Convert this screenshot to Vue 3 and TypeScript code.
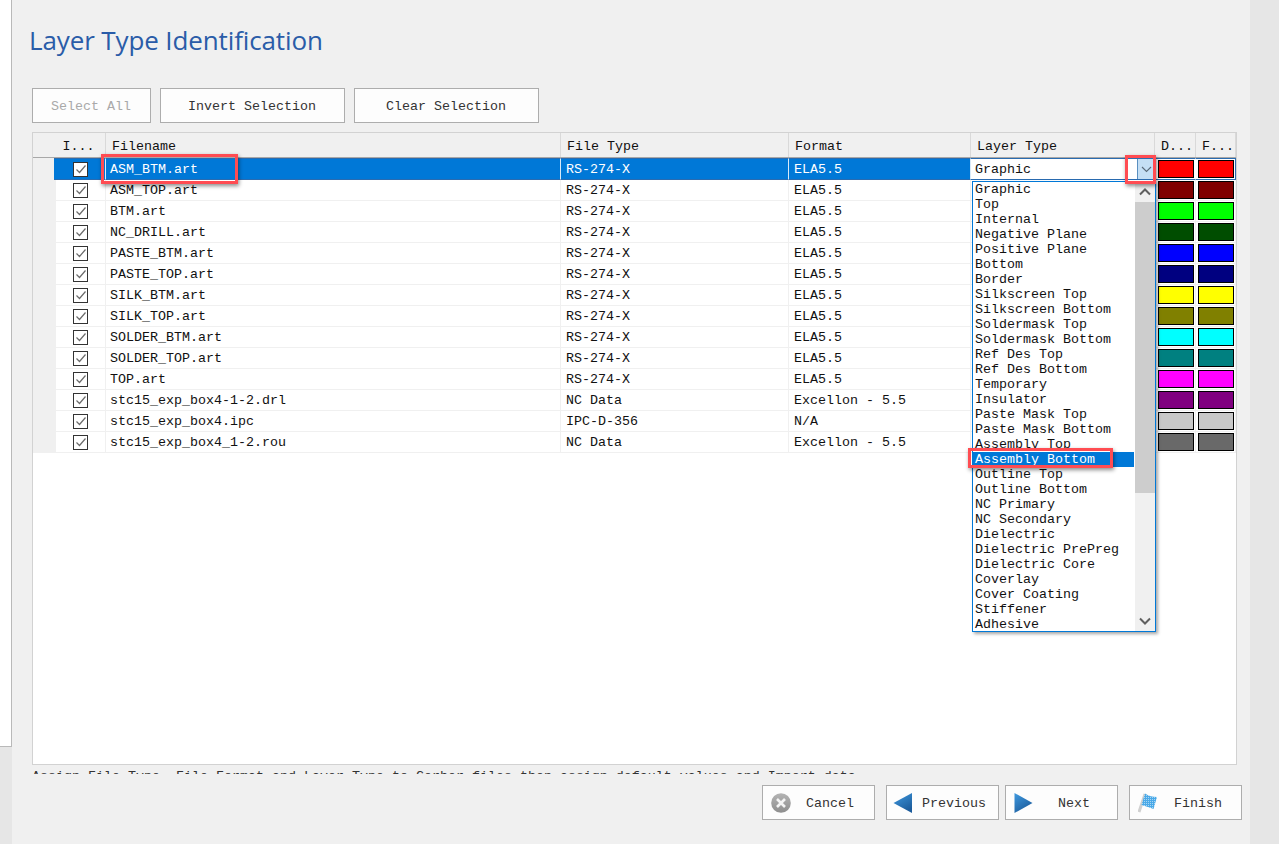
<script setup lang="ts">
const files: [string, string, string, string, string][] = [
  ['ASM_BTM.art', 'RS-274-X', 'ELA5.5', '#ff0000', 'Graphic'],
  ['ASM_TOP.art', 'RS-274-X', 'ELA5.5', '#800000', ''],
  ['BTM.art', 'RS-274-X', 'ELA5.5', '#00ff00', ''],
  ['NC_DRILL.art', 'RS-274-X', 'ELA5.5', '#004d00', ''],
  ['PASTE_BTM.art', 'RS-274-X', 'ELA5.5', '#0000ff', ''],
  ['PASTE_TOP.art', 'RS-274-X', 'ELA5.5', '#000080', ''],
  ['SILK_BTM.art', 'RS-274-X', 'ELA5.5', '#ffff00', ''],
  ['SILK_TOP.art', 'RS-274-X', 'ELA5.5', '#808000', ''],
  ['SOLDER_BTM.art', 'RS-274-X', 'ELA5.5', '#00ffff', ''],
  ['SOLDER_TOP.art', 'RS-274-X', 'ELA5.5', '#008080', ''],
  ['TOP.art', 'RS-274-X', 'ELA5.5', '#ff00ff', ''],
  ['stc15_exp_box4-1-2.drl', 'NC Data', 'Excellon - 5.5', '#800080', ''],
  ['stc15_exp_box4.ipc', 'IPC-D-356', 'N/A', '#c8c8c8', ''],
  ['stc15_exp_box4_1-2.rou', 'NC Data', 'Excellon - 5.5', '#696969', '']
]
const layers: string[] = [
  'Graphic', 'Top', 'Internal', 'Negative Plane', 'Positive Plane', 'Bottom', 'Border',
  'Silkscreen Top', 'Silkscreen Bottom', 'Soldermask Top', 'Soldermask Bottom', 'Ref Des Top',
  'Ref Des Bottom', 'Temporary', 'Insulator', 'Paste Mask Top', 'Paste Mask Bottom', 'Assembly Top',
  'Assembly Bottom', 'Outline Top', 'Outline Bottom', 'NC Primary', 'NC Secondary', 'Dielectric',
  'Dielectric PrePreg', 'Dielectric Core', 'Coverlay', 'Cover Coating', 'Stiffener', 'Adhesive'
]
</script>

<template>
  <div class="page">
    <div class="side"><div class="side-white"></div></div>
    <main class="main">
      <h1 class="title">Layer Type Identification</h1>
      <div class="tools">
        <button class="btn sel disabled">Select All</button>
        <button class="btn wide">Invert Selection</button>
        <button class="btn wide">Clear Selection</button>
      </div>
      <section class="table">
        <div class="row head">
          <div class="c c0"></div>
          <div class="c c1 ctr">I...</div>
          <div class="c c2">Filename</div>
          <div class="c c3">File Type</div>
          <div class="c c4">Format</div>
          <div class="c c5">Layer Type</div>
          <div class="c c6">D...</div>
          <div class="c c7">F...</div>
        </div>
        <div v-for="(f, i) in files" :key="f[0]" class="row body" :class="{ active: i === 0 }">
          <div class="c c0"></div>
          <div class="c c1 ctr">
            <span class="check">
              <svg width="12" height="12" viewBox="0 0 12 12"><path d="M1.5 6.5 L4.5 9.5 L10.5 2.5" fill="none" stroke="#6b6b6b" stroke-width="1.2" /></svg>
            </span>
          </div>
          <div class="c c2"><span class="txt">{{ f[0] }}</span></div>
          <div class="c c3"><span class="txt">{{ f[1] }}</span></div>
          <div class="c c4"><span class="txt">{{ f[2] }}</span></div>
          <div class="c c5">
            <div v-if="i === 0" class="combo">
              <span class="combo-val">{{ f[4] }}</span>
              <span class="combo-btn">
                <svg width="11" height="7" viewBox="0 0 11 7"><path d="M1 1 L5.5 5.5 L10 1" fill="none" stroke="#5a6b7a" stroke-width="1.1" /></svg>
              </span>
            </div>
          </div>
          <div class="c c6 swc"><span class="sw" :style="{ background: f[3] }"></span></div>
          <div class="c c7 swc"><span class="sw" :style="{ background: f[3] }"></span></div>
        </div>

        <div class="drop">
          <ul class="list">
            <li v-for="l in layers" :key="l" :class="{ on: l === 'Assembly Bottom' }">{{ l }}</li>
          </ul>
          <div class="scroll">
            <svg class="arr" width="12" height="8" viewBox="0 0 12 8"><path d="M1 6.5 L6 1.5 L11 6.5" fill="none" stroke="#5f5f5f" stroke-width="2" /></svg>
            <div class="thumb"></div>
            <svg class="arr down" width="12" height="8" viewBox="0 0 12 8"><path d="M1 1.5 L6 6.5 L11 1.5" fill="none" stroke="#5f5f5f" stroke-width="2" /></svg>
          </div>
        </div>
        <div class="mark m-file"></div>
        <div class="mark m-btn"></div>
        <div class="mark m-item"></div>
      </section>
      <div class="hint"><span>Assign File Type, File Format and Layer Type to Gerber files then assign default values and Import data</span></div>
      <footer class="foot">
        <button class="btn nav cancel">
          <svg width="20" height="20" viewBox="0 0 20 20">
            <defs><linearGradient id="g0" x1="0" y1="0" x2="0" y2="1"><stop offset="0" stop-color="#b4b4b4" /><stop offset="1" stop-color="#8e8e8e" /></linearGradient></defs>
            <circle cx="10" cy="10" r="9.8" fill="url(#g0)" />
            <path d="M6 6 L14 14 M14 6 L6 14" stroke="#f4f4f4" stroke-width="2.6" />
          </svg>
          <span class="lb">Cancel</span>
        </button>
        <button class="btn nav prev">
          <svg width="20" height="22" viewBox="0 0 20 22">
            <defs><linearGradient id="g1" x1="0" y1="0" x2="0.6" y2="1"><stop offset="0" stop-color="#3f9ae0" /><stop offset="1" stop-color="#1c5c9c" /></linearGradient></defs>
            <path d="M0.5 11 L19 1 L19 21 Z" fill="url(#g1)" />
          </svg>
          <span class="lb">Previous</span>
        </button>
        <button class="btn nav next">
          <svg width="19" height="22" viewBox="0 0 19 22">
            <path d="M0.5 1 L18.5 11 L0.5 21 Z" fill="url(#g1)" />
          </svg>
          <span class="lb">Next</span>
        </button>
        <button class="btn nav finish">
          <svg width="20" height="20" viewBox="0 0 20 20">
            <defs>
              <pattern id="chk" width="2" height="2" patternUnits="userSpaceOnUse"><rect width="2" height="2" fill="#4aa9e8" /><rect width="1" height="1" fill="#a7d6f2" /></pattern>
            </defs>
            <path d="M1 19 L7 1" stroke="#d0d0d0" stroke-width="3" />
            <path d="M7 0.5 C10 3 15 4 19 4 L15.5 16 C12 15 8 13 3.5 12 Z" fill="url(#chk)" />
          </svg>
          <span class="lb">Finish</span>
        </button>
      </footer>
    </main>
    <div class="right"></div>
  </div>
</template>

<style>
html, body { margin: 0; padding: 0; overflow: hidden; }
</style>

<style scoped>
.page {
  width: 1279px;
  height: 844px;
  display: flex;
  background: #f0f0f0;
  font-family: "Liberation Mono", monospace;
  font-size: 13.33px;
  color: #111;
  overflow: hidden;
}
.side { width: 12px; flex: none; background: #e6e6e6; }
.side-white {
  height: 747px;
  box-sizing: border-box;
  background: #fff;
  border-right: 1px solid #b9b9b9;
  border-bottom: 1px solid #b9b9b9;
  width: 12px;
}
.main {
  width: 1238px;
  flex: none;
  box-sizing: border-box;
  padding: 0 0 0 20px;
  display: flex;
  flex-direction: column;
}
.right { flex: 1; background: #e6e6e6; }
.title {
  margin: 0 0 0 -3px;
  height: 88px;
  box-sizing: border-box;
  padding-top: 23px;
  font: 400 26px/34px "Open Sans", sans-serif;
  color: #2a5ca8;
  letter-spacing: -0.12px;
}
.tools { display: flex; gap: 9px; height: 35px; }
.btn {
  box-sizing: border-box;
  height: 35px;
  background: #fdfdfd;
  border: 1px solid #adadad;
  padding: 2px 1px 0 0;
  font: inherit;
  color: #333;
  display: flex;
  align-items: center;
  justify-content: center;
}
.sel { width: 119px; }
.wide { width: 185px; }
.disabled { color: #a9a9a9; }
.table {
  position: relative;
  box-sizing: border-box;
  width: 1205px;
  height: 633px;
  margin-top: 9px;
  background: #fff;
  border: 1px solid #d2d2d2;
}
.row { display: grid; grid-template-columns: 23px 50px 455px 228px 182px 184px 41px 40px; }
.head {
  height: 25px;
  grid-template-rows: 24px;
  box-sizing: border-box;
  background: #f0f0f0;
  border-bottom: 1px solid #a8a8a8;
  line-height: 28px;
}
.head .c { border-right: 1px solid #d9d9d9; padding-left: 6px; box-sizing: border-box; }
.head .c0 { border-right: 0; padding: 0; }
.head .ctr { padding: 0 4px 0 0; text-align: center; }
.body { height: 21px; grid-template-rows: 21px; }
.body .c { box-sizing: border-box; border-right: 1px solid #f0f0f0; border-bottom: 1px solid #f0f0f0; line-height: 22px; padding-left: 5px; }
.body .c2 { padding-left: 4px; }
.body .c0 { background: #f0f0f0; padding: 0; }
.body .ctr { padding: 0; display: flex; align-items: center; justify-content: center; }
.active { height: 22px; grid-template-rows: 22px; }
.active .c {
  background: #0078d7;
  color: #fff;
  border-right-color: #d8e9f8;
  border-top: 1px solid #2a6bb0;
  border-bottom-color: #2a6bb0;
  line-height: 22px;
}
.active .c0 { background: #f0f0f0; border-color: #f0f0f0; }
.active .c1 { margin-left: -2px; padding-left: 2px; }
.active .c5 { padding: 0; background: #fff; border-right-color: #2a6bb0; }
.active .c6, .active .c7 { background: #fff; border-right-color: #fff; }
.active .c7 { border-right-color: #2a6bb0; }
.check {
  box-sizing: border-box;
  width: 15px;
  height: 15px;
  border: 1px solid #333;
  background: #fff;
  display: flex;
  align-items: center;
  justify-content: center;
}
.combo {
  display: flex;
  height: 20px;
  background: #fff;
  color: #111;
  align-items: stretch;
}
.combo-val { flex: 1; line-height: 22px; padding-left: 4px; }
.combo-btn {
  width: 17px;
  background: #c4dff5;
  border-left: 1px solid #5a8fc0;
  display: flex;
  align-items: center;
  justify-content: center;
  box-sizing: border-box;
}
.body .swc { padding: 0 1px 0 0; display: flex; align-items: center; justify-content: flex-end; }
.sw { box-sizing: border-box; width: 36px; height: 18px; border: 1px solid #000; display: block; }
.drop {
  position: absolute;
  left: 939px;
  top: 48px;
  width: 184px;
  height: 451px;
  box-sizing: border-box;
  border: 1px solid #0078d7;
  background: #fff;
  display: flex;
  box-shadow: 2px 2px 3px rgba(0, 0, 0, 0.35);
}
.list {
  list-style: none;
  margin: 0;
  padding: 0;
  flex: 1;
  line-height: 15px;
  overflow: hidden;
  color: #111;
}
.list li { height: 15px; padding-left: 2px; margin-right: 1px; }
.list li.on { background: #0078d7; color: #fff; }
.scroll {
  width: 20px;
  flex: none;
  background: #f0f0f0;
  display: flex;
  flex-direction: column;
  align-items: center;
  position: relative;
}
.arr { margin-top: 6px; flex: none; height: 8px; }
.thumb { width: 20px; height: 291px; background: #cdcdcd; margin-top: 6px; }
.down { position: absolute; bottom: 6px; margin: 0; }
.mark {
  position: absolute;
  border: 3px solid #ff4c52;
  box-sizing: border-box;
  box-shadow: 1px 2px 4px rgba(0, 0, 0, 0.45);
  pointer-events: none;
}
.m-file { left: 68px; top: 21px; width: 137px; height: 30px; }
.m-btn { left: 1092px; top: 22px; width: 31px; height: 29px; }
.m-item { left: 935px; top: 315px; width: 145px; height: 20px; }
.hint {
  height: 5px;
  margin-top: 4px;
  overflow: hidden;
  line-height: 15px;
  white-space: pre;
  color: #333;
}
.foot {
  margin-top: 11px;
  display: flex;
  margin-left: 730px;
}
.nav {
  flex: none;
  width: 113px;
  justify-content: flex-start;
  position: relative;
  padding: 0;
}
.cancel { padding-left: 8px; }
.prev { margin-left: 11px; padding-left: 6px; }
.next { margin-left: 6px; padding-left: 8px; }
.finish { margin-left: 11px; padding-left: 8px; }
.lb { position: absolute; top: 2px; bottom: 0; display: flex; align-items: center; }
.cancel .lb { left: 43px; }
.prev .lb { left: 35px; }
.next .lb { left: 52px; }
.finish .lb { left: 44px; }
</style>
